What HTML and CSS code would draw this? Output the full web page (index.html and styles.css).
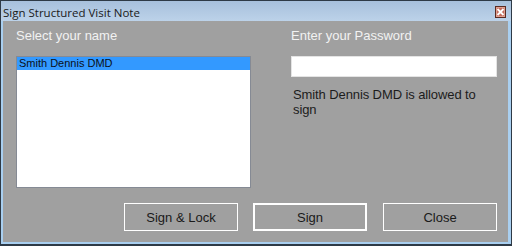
FILE: index.html
```html
<!DOCTYPE html>
<html>
<head>
<meta charset="utf-8">
<link rel="stylesheet" href="styles.css">
</head>
<body>
<div class="window">
  <div class="frame">
    <div class="titlebar">
      <span class="title">Sign Structured Visit Note</span>
      <span class="close-x"><svg width="9" height="8" viewBox="0 0 9 8"><path d="M1.5 1 L7.5 7 M7.5 1 L1.5 7" stroke="#fff" stroke-width="1.8"/></svg></span>
    </div>
    <div class="client">
      <div class="top">
        <div class="col-left">
          <div class="label">Select your name</div>
          <div class="listbox">
            <div class="item selected">Smith Dennis DMD</div>
          </div>
        </div>
        <div class="col-right">
          <div class="label">Enter your Password</div>
          <div class="input"></div>
          <div class="message">Smith Dennis DMD is allowed to sign</div>
        </div>
      </div>
      <div class="buttons">
        <div class="btn">Sign &amp; Lock</div>
        <div class="btn default">Sign</div>
        <div class="btn">Close</div>
      </div>
    </div>
  </div>
</div>
</body>
</html>
```

FILE: styles.css
```css
html, body {
  margin: 0;
  padding: 0;
  background: #ffffff;
}
.window {
  width: 512px;
  height: 246px;
  box-sizing: border-box;
  border: 1px solid #2e3a46;
  border-bottom-width: 2px;
  background: #b5d5f2;
}
.frame {
  height: 100%;
  box-sizing: border-box;
  padding: 0 3px 2px 2px;
  display: flex;
  flex-direction: column;
  background: #a9cff0;
}
.titlebar {
  height: 20px;
  margin: 0 -3px 0 -2px;
  padding: 0 5px 0 2px;
  display: flex;
  align-items: center;
  justify-content: space-between;
  background: linear-gradient(to bottom, #a7c0dc 0%, #bcd2e9 100%);
  background-color: #b8cfe6;
}
.title {
  font-family: "Open Sans", "Noto Sans", sans-serif;
  font-size: 11.5px;
  color: #1a1a1a;
  margin-top: 2px;
}
.close-x {
  width: 9px;
  height: 10px;
  border: 1px solid #5a2a22;
  background: #c46a5c;
  display: flex;
  align-items: center;
  justify-content: center;
  margin-top: 1px;
  box-shadow: inset 0 0 0 1px #e0a090;
}
.client {
  flex: 1;
  background: #a0a0a0;
  padding: 7px 11px 0 13px;
  display: flex;
  flex-direction: column;
  font-family: "Liberation Sans", Arial, sans-serif;
}
.top {
  display: flex;
  gap: 40px;
}
.col-left {
  width: 235px;
}
.col-right {
  width: 206px;
}
.label {
  font-size: 13px;
  line-height: 16px;
  color: #f2f2f2;
  height: 16px;
  margin-bottom: 12px;
}
.listbox {
  height: 132px;
  box-sizing: border-box;
  border: 1px solid #858a94;
  background: #ffffff;
}
.item {
  height: 13px;
  font-size: 11px;
  line-height: 13px;
  padding-left: 2px;
  color: #000;
}
.item.selected {
  background: #3399ff;
  color: #0a1020;
}
.input {
  height: 21px;
  box-sizing: border-box;
  border: 1px solid #e4e4e4;
  background: #ffffff;
}
.message {
  margin-top: 10px;
  font-size: 13px;
  line-height: 15px;
  color: #1c1c1c;
  width: 206px;
  padding-left: 2px;
  letter-spacing: -0.1px;
}
.buttons {
  margin-top: 15px;
  display: flex;
  justify-content: flex-end;
  gap: 15px;
}
.btn {
  width: 114px;
  height: 28px;
  box-sizing: border-box;
  border: 1px solid #ffffff;
  display: flex;
  align-items: center;
  justify-content: center;
  font-size: 13px;
  color: #1a1a1a;
}
.btn.default {
  border-width: 2px;
  margin-right: 1px;
}
```
